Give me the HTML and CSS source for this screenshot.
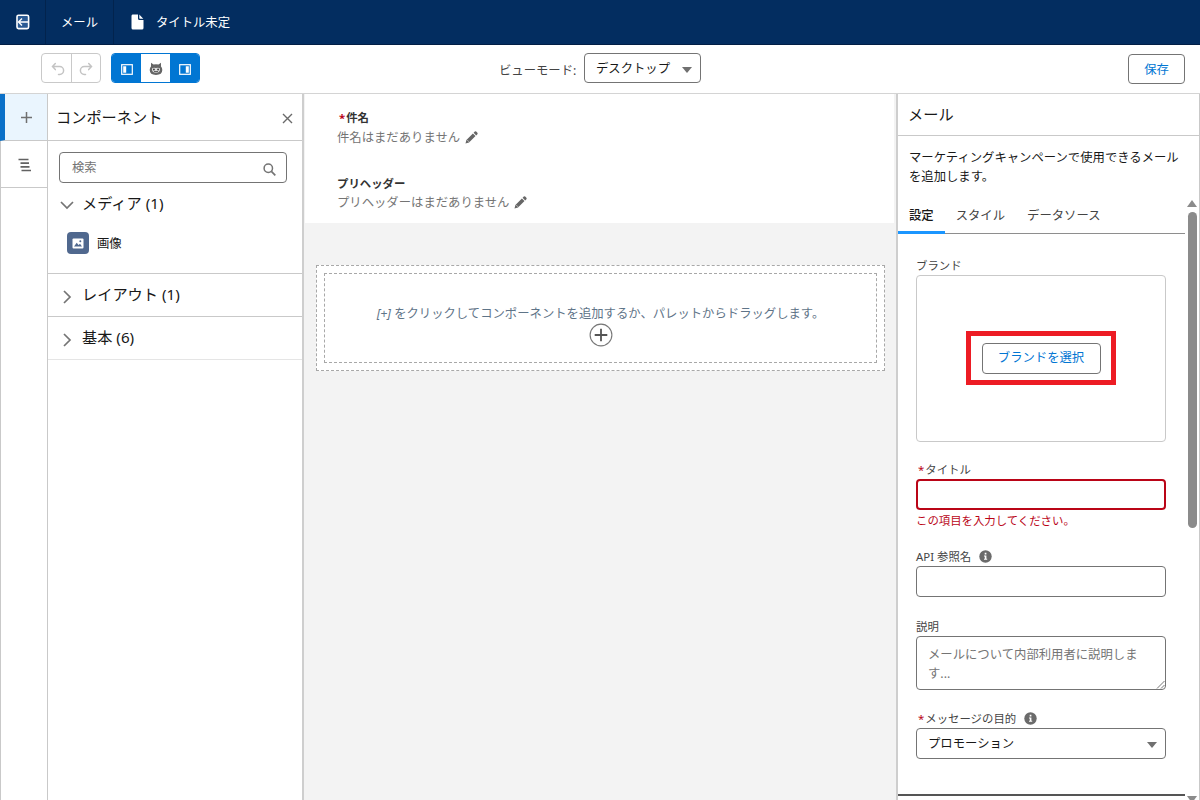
FILE: index.html
```html
<!DOCTYPE html>
<html lang="ja">
<head>
<meta charset="utf-8">
<title>タイトル未定</title>
<link rel="stylesheet" href="styles.css">
</head>
<body>
<div class="app">
  <header class="topbar">
    <div class="top-cell top-back">
      <svg width="14" height="16" viewBox="0 0 14 16" fill="none" stroke="#fff"><rect x="1" y="1.200" width="11.600" height="13.400" rx="1.500" fill="#2a5a94" stroke-width="1.600"/><path d="M2.500 8h9.500M6 4.500 2.500 8 6 11.500" stroke-width="1.400"/></svg>
    </div>
    <div class="top-cell top-app">メール</div>
    <div class="top-cell top-doc">
      <svg width="13" height="16" viewBox="0 0 13 16" fill="#fff"><path d="M1.500.5H7V4.500q0 1.500 1.500 1.500H12.500V14q0 1.500-1.500 1.500H2Q.5 15.500.5 14V2Q.5.5 1.500.5zM8.300.6 12.300 4.700H8.900q-.6 0-.6-.6z"/></svg>
      <span>タイトル未定</span>
    </div>
  </header>

  <div class="toolbar">
    <div class="history">
      <span class="tool"><svg width="14" height="14" viewBox="0 0 14 14" fill="none" stroke="#c4c4c4" stroke-width="1.500" stroke-linecap="round"><path d="M4.300 1.500 1.500 4.600l2.800 3M1.800 4.600H8.700a3.900 3.900 0 0 1 0 7.800H7.500"/></svg></span>
      <span class="tool"><svg width="14" height="14" viewBox="0 0 14 14" fill="none" stroke="#c4c4c4" stroke-width="1.500" stroke-linecap="round"><path d="M9.700 1.500 12.500 4.600l-2.800 3M12.200 4.600H5.300a3.900 3.900 0 0 0 0 7.800H6.500"/></svg></span>
    </div>
    <div class="panels">
      <span class="tool on"><svg width="12" height="11" viewBox="0 0 12 11"><rect x=".7" y=".7" width="10.600" height="9.600" fill="none" stroke="#fff" stroke-width="1.200"/><path d="M2.200 2.200h3v6.600h-3z" fill="#fff"/></svg></span>
      <span class="tool mid"><svg width="14" height="14" viewBox="0 0 14 14"><path d="M2 4.500V.8l2.500 1.800q2.500-.6 5 0L12 .8v3.700q1.300 1.400 1.300 3.500 0 4.900-6.300 4.900T.7 8Q.7 5.900 2 4.500z" fill="#666"/><path d="M3 6.500q1-1.200 4-.6 3-.6 4 .6.600 4-4 4.300Q2.400 10.500 3 6.500z" fill="#ddd"/><circle cx="4.900" cy="7.400" r="1" fill="#444"/><circle cx="9.100" cy="7.400" r="1" fill="#444"/><path d="M5 9.600h4" stroke="#555"/></svg></span>
      <span class="tool on"><svg width="12" height="11" viewBox="0 0 12 11"><rect x=".7" y=".7" width="10.600" height="9.600" fill="none" stroke="#fff" stroke-width="1.200"/><path d="M6.800 2.200h3v6.600h-3z" fill="#fff"/></svg></span>
    </div>
    <div class="view-mode">
      <span class="view-label">ビューモード:</span>
      <div class="select view-select"><span>デスクトップ</span><i class="caret"></i></div>
    </div>
    <button class="btn save">保存</button>
  </div>

  <main class="workspace">
    <nav class="rail">
      <div class="rail-item active"><svg width="13" height="13" viewBox="0 0 13 13"><path d="M6.500 1v11M1 6.500h11" stroke="#707070" stroke-width="1.500"/></svg></div>
      <div class="rail-item"><svg width="14" height="14" viewBox="0 0 14 14"><path d="M.5 1.500h10M2.500 5.200h8.500M2.500 8.900h9M3.500 12.500h9.500" stroke="#626262" stroke-width="1.700"/></svg></div>
    </nav>

    <aside class="palette">
      <div class="palette-head"><h2>コンポーネント</h2>
        <svg width="11" height="11" viewBox="0 0 11 11"><path d="m1 1 9 9M10 1l-9 9" stroke="#6a6a6a" stroke-width="1.400"/></svg></div>
      <div class="media">
        <div class="search"><span>検索</span><svg width="13" height="13" viewBox="0 0 13 13" fill="none" stroke="#747474"><circle cx="5.300" cy="5.300" r="4.200" stroke-width="1.500"/><path d="m8.400 8.400 3.900 3.900" stroke-width="1.700"/></svg></div>
        <div class="section-title"><svg width="14" height="14" viewBox="0 0 14 14"><path d="m1 4 6 6 6-6" fill="none" stroke="#747474" stroke-width="1.700"/></svg>メディア (1)</div>
        <div class="component"><span class="component-icon"><svg width="12" height="11" viewBox="0 0 12 11"><rect x=".5" y=".5" width="11" height="10" rx="1" fill="#fff"/><path d="M2 8.500 4.700 4.800 6.500 7 8 5.800l2 2.700z" fill="#50688e"/><circle cx="8.300" cy="3.300" r="1" fill="#50688e"/></svg></span><span class="component-name">画像</span></div>
      </div>
      <div class="section"><svg width="14" height="14" viewBox="0 0 14 14"><path d="m4 1 6 6-6 6" fill="none" stroke="#747474" stroke-width="1.700"/></svg>レイアウト (1)</div>
      <div class="section light"><svg width="14" height="14" viewBox="0 0 14 14"><path d="m4 1 6 6-6 6" fill="none" stroke="#747474" stroke-width="1.700"/></svg>基本 (6)</div>
    </aside>

    <section class="canvas">
      <div class="mail-head">
        <div class="mail-label"><span class="req">*</span>件名</div>
        <div class="mail-value"><span>件名はまだありません</span><svg width="13" height="13" viewBox="0 0 13 13" fill="#666"><path d="M.5 12.500 1.400 9 7.900 2.500l2.600 2.600L4 11.600zM8.600 1.800 9.800.6q.7-.6 1.400 0l1.200 1.200q.6.700 0 1.400l-1.200 1.200z"/><path d="m2.300 9.100 1.700 1.700" stroke="#fff" stroke-width=".6"/></svg></div>
        <div class="mail-label second">プリヘッダー</div>
        <div class="mail-value"><span>プリヘッダーはまだありません</span><svg width="13" height="13" viewBox="0 0 13 13" fill="#666"><path d="M.5 12.500 1.400 9 7.900 2.500l2.600 2.600L4 11.600zM8.600 1.800 9.800.6q.7-.6 1.400 0l1.200 1.200q.6.700 0 1.400l-1.200 1.200z"/><path d="m2.300 9.100 1.700 1.700" stroke="#fff" stroke-width=".6"/></svg></div>
      </div>
      <div class="drop-outer">
        <div class="drop-inner">
          <p><em>[+]</em> をクリックしてコンポーネントを追加するか、パレットからドラッグします。</p>
          <svg width="24" height="24" viewBox="0 0 24 24" fill="none"><circle cx="12" cy="12" r="10.900" stroke="#777" stroke-width="1.100"/><path d="M12 5.700v12.600M5.700 12h12.600" stroke="#555" stroke-width="1.800"/></svg>
        </div>
      </div>
    </section>

    <aside class="props">
      <h2 class="props-title">メール</h2>
      <p class="props-desc">マーケティングキャンペーンで使用できるメール<br>を追加します。</p>
      <div class="props-body">
        <div class="props-main">
          <div class="tabs"><span class="tab selected">設定</span><span class="tab">スタイル</span><span class="tab">データソース</span></div>
          <div class="form">
            <div class="label">ブランド</div>
            <div class="brand-box"><div class="highlight"><button class="btn brand-btn">ブランドを選択</button></div></div>
            <div class="label title-label"><span class="req">*</span>タイトル</div>
            <div class="input invalid"></div>
            <div class="error">この項目を入力してください。</div>
            <div class="label api-label">API 参照名<svg class="info" width="13" height="13" viewBox="0 0 13 13"><circle cx="6.500" cy="6.500" r="6.200" fill="#6b6b6b"/><path d="M5.700 2.800h1.700v1.600H5.700zM5 5.400h2.400v3.400h.8v1H5v-1h.8V6.400H5z" fill="#fff"/></svg></div>
            <div class="input"></div>
            <div class="label desc-label">説明</div>
            <div class="textarea">メールについて内部利用者に説明します...<svg width="9" height="9" viewBox="0 0 9 9"><path d="M1 8.500 8.500 1M5 8.500 8.500 5" stroke="#777"/></svg></div>
            <div class="label purpose-label"><span class="req">*</span>メッセージの目的<svg class="info" width="13" height="13" viewBox="0 0 13 13"><circle cx="6.500" cy="6.500" r="6.200" fill="#6b6b6b"/><path d="M5.700 2.800h1.700v1.600H5.700zM5 5.400h2.400v3.400h.8v1H5v-1h.8V6.400H5z" fill="#fff"/></svg></div>
            <div class="select"><span>プロモーション</span><i class="caret"></i></div>
          </div>
          <div class="divider"></div>
        </div>
        <div class="scrollbar"><i class="arrow-up"></i><i class="thumb"></i><i class="arrow-down"></i></div>
      </div>
    </aside>
  </main>
</div>
</body>
</html>
```
FILE: styles.css
```css
* { box-sizing: border-box; }
body {
  margin: 0;
  font-family: "Noto Sans", "Noto Sans CJK JP", sans-serif;
  font-size: 12.35px;
  line-height: 18.5px;
  color: #181818;
}
h2, p { margin: 0; font-weight: 400; }
svg { display: block; flex: none; }
.app { width: 1200px; height: 800px; display: flex; flex-direction: column; overflow: hidden; background: #fff; }

.topbar { height: 45px; flex: none; display: flex; background: #032d60; border-bottom: 1px solid #021e45; color: #fff; }
.top-cell { display: flex; align-items: center; }
.top-back { width: 46px; padding-left: 16px; border-right: 1px solid #02234d; }
.top-app { width: 68px; padding: 2px 0 0 15px; border-right: 1px solid #02234d; }
.top-doc { padding-left: 17px; gap: 12px; }
.top-doc span { padding-top: 2px; }

.toolbar { height: 49px; flex: none; display: flex; align-items: flex-start; padding: 8px 15px 0 41px; border-bottom: 1px solid #d4d4d4; }
.history, .panels { display: flex; height: 30px; border-radius: 4px; overflow: hidden; }
.history { width: 60px; border: 1px solid #c9c9c9; }
.history .tool { padding: 1px 0 0 2px; }
.history .tool + .tool { border-left: 1px solid #c9c9c9; padding: 1px 1px 0 0; }
.panels { width: 89px; margin-left: 10px; border: 1px solid #0176d3; }
.tool { flex: 1; display: flex; align-items: center; justify-content: center; }
.tool.on { background: #0176d3; }
.panels .tool { padding: 2px 0 0 1px; }
.panels .mid { margin: -1px 0; border: solid #747474; border-width: 1px 0; }
.view-mode { display: flex; align-items: center; margin-left: 299px; }
.view-label { width: 84px; padding-top: 6px; color: #444; }
.select { height: 31px; display: flex; align-items: center; justify-content: space-between; border: 1px solid #747474; border-radius: 4px; padding: 0 8px 0 11px; background: #fff; }
.select span { padding-top: 2px; }
.view-select { width: 118px; height: 30px; margin-left: 1px; }
.view-select { width: 117px; }
.caret { margin-top: 3px; border: 5px solid transparent; border-top: 6px solid #707070; border-bottom: 0; }
.btn { font: inherit; color: #0176d3; background: #fff; border: 1px solid #747474; border-radius: 4px; padding: 0; }
.save { width: 57px; height: 30px; margin: 1px 0 0 auto; padding-top: 2px; }

.workspace { flex: 1; min-height: 0; display: flex; }
.rail { width: 48px; border-left: 1px solid #c9c9c9; border-right: 1px solid #c9c9c9; }
.rail-item { height: 47px; display: flex; align-items: center; justify-content: center; border-bottom: 1px solid #c9c9c9; padding: 2px 0 0 1px; }
.rail-item.active { margin-left: -1px; border-left: 5px solid #0b70c8; background: #eaf5fe; padding: 0; }

.palette { width: 256px; border-right: 2px solid #cecece; }
.palette-head { height: 47px; display: flex; align-items: center; justify-content: space-between; padding: 3px 9px 0 8px; border-bottom: 1px solid #c9c9c9; }
.palette h2 { font-size: 15.2px; padding-bottom: 3px; }
.media { height: 133px; padding: 11px 15px 0 11px; border-bottom: 1px solid #c9c9c9; }
.search { height: 31px; border: 1px solid #747474; border-radius: 4px; display: flex; align-items: center; justify-content: space-between; padding: 1px 10px 0 12px; color: #747474; }
.search svg { margin-top: 2px; }
.section-title { display: flex; align-items: center; gap: 8px; height: 22px; margin-top: 9px; padding-left: 1px; font-size: 15.2px; }
.section-title svg { margin-top: 3px; }
.component { display: flex; align-items: center; gap: 8px; margin-top: 18px; padding-left: 8px; }
.component-icon { width: 22px; height: 22px; border-radius: 4px; background: #50688e; display: grid; place-items: center; }
.component-name { padding-top: 2px; }
.section { height: 43px; display: flex; align-items: center; gap: 8px; padding: 0 0 2px 12px; border-bottom: 1px solid #c9c9c9; font-size: 15.2px; }
.section svg { margin-top: 5px; }
.light { border-color: #e5e5e5; }

.canvas { width: 592px; background: #f3f3f3; }
.mail-head { height: 129px; margin: 0 2px 0 1px; padding: 15px 0 0 32px; background: #fff; }
.mail-label { font-size: 11.4px; font-weight: 700; color: #333; height: 18px; display: flex; }
.mail-label.second { margin-top: 28px; }
.mail-label.second + .mail-value { margin-top: 0; }
.mail-value { display: flex; align-items: center; gap: 5px; height: 19px; margin-top: 1px; color: #747474; }
.mail-value span { padding-top: 2px; }
.req { color: #ba0517; margin: 0 1px 0 2px; }
.drop-outer { width: 569px; height: 106px; margin: 42px 0 0 12px; padding: 7px; border: 1px dashed #a8a8a8; background: #fff; }
.drop-inner { height: 90px; padding-top: 31px; border: 1px dashed #a8a8a8; display: flex; flex-direction: column; align-items: center; color: #5f7488; }
.drop-inner svg { margin-top: -1px; }

.props { flex: 1; display: flex; flex-direction: column; border-left: 2px solid #cecece; border-right: 1px solid #c9c9c9; }
.props-title { height: 42px; flex: none; padding: 11px 0 0 10px; font-size: 15.2px; border-bottom: 1px solid #c9c9c9; }
.props-desc { height: 61px; flex: none; padding: 13px 0 0 11px; white-space: nowrap; }
.props-body { flex: 1; min-height: 0; display: flex; }
.props-main { width: 287px; display: flex; flex-direction: column; }
.tabs { height: 37px; flex: none; display: flex; color: #444; border-bottom: 1px solid #8e8e8e; }
.tab { height: 37px; padding: 10px 11px 0; }
.tab.selected { color: #181818; border-bottom: 3px solid #1b96ff; font-weight: 500; }
.form { flex: 1; padding: 21px 19px 0 18px; }
.label { font-size: 11.4px; height: 20px; padding-top: 1px; line-height: 20px; color: #444; display: flex; align-items: center; }
.brand-box { height: 167px; padding-bottom: 2px; border: 1px solid #c9c9c9; border-radius: 4px; display: flex; justify-content: center; align-items: center; }
.highlight { width: 150px; height: 54px; padding-top: 1px; border: 5px solid #ed1c24; display: grid; place-items: center; }
.brand-btn { width: 119px; height: 31px; padding-top: 1px; }
.title-label { margin-top: 17px; }
.input { height: 31px; border: 1px solid #747474; border-radius: 4px; }
.input.invalid { border: 2px solid #ba0517; }
.error { font-size: 11.4px; color: #ba0517; height: 20px; padding-top: 2px; }
.api-label { margin-top: 16px; }
.info { margin-left: 8px; }
.desc-label { margin-top: 19px; }
.textarea { height: 54px; position: relative; border: 1px solid #747474; border-radius: 4px; padding: 9px 20px 0 11px; color: #747474; }
.textarea svg { position: absolute; right: 0; bottom: 0; }
.purpose-label { margin-top: 18px; }
.divider { height: 6px; border-top: 2px solid #555; }
.scrollbar { flex: 1; display: flex; flex-direction: column; align-items: center; padding-top: 3px; }
.arrow-up { border: 5px solid transparent; border-bottom: 7px solid #8b8b8b; border-top: 0; }
.thumb { width: 9px; height: 316px; margin-top: 5px; border-radius: 5px; background: #8b8b8b; }
.arrow-down { margin-top: auto; height: 4px; border: 5px solid transparent; border-top: 7px solid #8b8b8b; border-bottom: 0; margin-bottom: -3px; }
```
